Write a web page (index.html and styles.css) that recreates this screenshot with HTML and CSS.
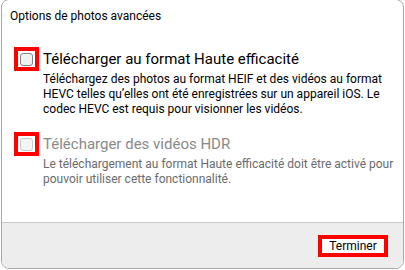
FILE: index.html
```html
<!DOCTYPE html>
<html lang="fr">
<head>
    <meta charset="UTF-8">
    <meta name="viewport" content="width=device-width, initial-scale=1.0">
    <title>Options de photos avancées</title>
    <link rel="stylesheet" href="styles.css">
</head>
<body>

<div class="dialog">
    <div class="dialog-body">
        <div class="dialog-title">Options de photos avancées</div>

        <div class="option">
            <span class="check-frame"><span class="check"></span></span>
            <div class="option-text">
                <div class="option-label">Télécharger au format Haute efficacité</div>
                <div class="option-desc">Téléchargez des photos au format HEIF et des vidéos au format HEVC telles qu’elles ont été enregistrées sur un appareil iOS. Le codec HEVC est requis pour visionner les vidéos.</div>
            </div>
        </div>

        <div class="option option-disabled">
            <span class="check-frame"><span class="check"></span></span>
            <div class="option-text">
                <div class="option-label">Télécharger des vidéos HDR</div>
                <div class="option-desc">Le téléchargement au format Haute efficacité doit être activé pour pouvoir utiliser cette fonctionnalité.</div>
            </div>
        </div>
    </div>

    <div class="dialog-footer">
        <button class="btn-done">Terminer</button>
    </div>
</div>

</body>
</html>
```
FILE: styles.css
```css
body {
    margin: 0;
    background-color: #fff;
    font-family: Roboto, "Liberation Sans", sans-serif;
    color: #000;
}

.dialog {
    box-sizing: border-box;
    width: 403px;
    height: 270px;
    margin: -1px 0 0 1px;
    border: 1px solid #a9a9a9;
    border-radius: 8px;
    background-color: #fff;
    display: flex;
    flex-direction: column;
    overflow: hidden;
}

.dialog-body {
    flex: 1;
    padding: 8px 6px 0 0;
}

.dialog-title {
    font-size: 12px;
    line-height: 16px;
    padding-left: 8px;
}

.option {
    display: grid;
    grid-template-columns: 25px 1fr;
    column-gap: 4px;
    padding-left: 12px;
    margin-top: 23px;
}

.option + .option {
    margin-top: 15px;
}

/* cadre rouge autour de la case */
.check-frame {
    box-sizing: border-box;
    width: 25px;
    height: 24px;
    border: 4px solid #ff0000;
    display: flex;
    justify-content: center;
    align-items: center;
}

.check {
    box-sizing: border-box;
    width: 13px;
    height: 13px;
    border: 1px solid #858585;
    border-radius: 3px;
    background-color: #f1f1f1;
}

.option-text {
    padding-top: 2px;
}

.option-label {
    font-size: 15px;
    line-height: 20px;
}

.option-desc {
    font-size: 12px;
    line-height: 15px;
    margin-top: 3px;
}

.option-disabled .check {
    border-color: #c8c8c8;
    background-color: #f4f4f4;
}

.option-disabled .option-label {
    color: #8a8a8a;
}

.option-disabled .option-desc {
    color: #6b6b6b;
}

.dialog-footer {
    height: 46px;
    box-sizing: border-box;
    border-top: 1px solid #c9c9c9;
    background-color: #ededed;
    display: flex;
    justify-content: flex-end;
    align-items: flex-start;
    padding: 12px 15px 0 0;
}

.btn-done {
    box-sizing: border-box;
    width: 70px;
    height: 22px;
    padding: 0;
    border: 4px solid #ff0000;
    background-color: #fff;
    font-family: Roboto, "Liberation Sans", sans-serif;
    font-size: 12px;
    color: #000;
    cursor: pointer;
}
```
